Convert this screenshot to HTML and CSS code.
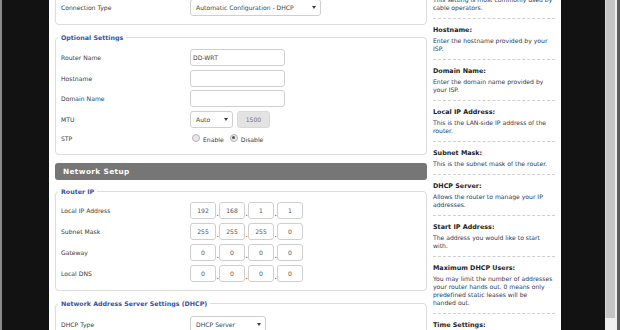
FILE: index.html
```html
<!DOCTYPE html>
<html>
<head>
  <title>Basic Setup</title>
  <meta name="viewport" content="width=device-width, initial-scale=1.0">
  <link rel="stylesheet" href="styles.css">
</head>
<body>
  <div class="screen">
    <div class="bezel-left"></div>

    <div class="page">
      <div class="form">
        <div class="card first">
          <div class="row">
            <span class="label">Connection Type</span>
            <div class="select conn">Automatic Configuration - DHCP<i class="caret"></i></div>
          </div>
        </div>

        <fieldset class="card optional">
          <legend>Optional Settings</legend>
          <div class="rows">
            <div class="row">
              <span class="label">Router Name</span>
              <div class="input">DD-WRT</div>
            </div>
            <div class="row">
              <span class="label">Hostname</span>
              <div class="input"></div>
            </div>
            <div class="row">
              <span class="label">Domain Name</span>
              <div class="input"></div>
            </div>
            <div class="row">
              <span class="label">MTU</span>
              <div class="select mtu">Auto<i class="caret"></i></div>
              <div class="input num disabled">1500</div>
            </div>
            <div class="row small">
              <span class="label">STP</span>
              <span class="radio"></span><span class="radio-text">Enable</span>
              <span class="radio checked"></span><span class="radio-text">Disable</span>
            </div>
          </div>
        </fieldset>

        <div class="section-title">Network Setup</div>

        <fieldset class="card router">
          <legend>Router IP</legend>
          <div class="rows">
            <div class="row">
              <span class="label">Local IP Address</span>
              <div class="ip"><span class="oct">192</span><i>.</i><span class="oct">168</span><i>.</i><span class="oct">1</span><i>.</i><span class="oct">1</span></div>
            </div>
            <div class="row">
              <span class="label">Subnet Mask</span>
              <div class="ip"><span class="oct">255</span><i>.</i><span class="oct">255</span><i>.</i><span class="oct">255</span><i>.</i><span class="oct">0</span></div>
            </div>
            <div class="row">
              <span class="label">Gateway</span>
              <div class="ip"><span class="oct">0</span><i>.</i><span class="oct">0</span><i>.</i><span class="oct">0</span><i>.</i><span class="oct">0</span></div>
            </div>
            <div class="row">
              <span class="label">Local DNS</span>
              <div class="ip"><span class="oct">0</span><i>.</i><span class="oct">0</span><i>.</i><span class="oct">0</span><i>.</i><span class="oct">0</span></div>
            </div>
          </div>
        </fieldset>

        <fieldset class="card dhcp">
          <legend>Network Address Server Settings (DHCP)</legend>
          <div class="row">
            <span class="label">DHCP Type</span>
            <div class="select dhcp-type">DHCP Server<i class="caret"></i></div>
          </div>
        </fieldset>
      </div>

      <div class="help">
        <div class="tip first">
          <h4>Automatic Configuration - DHCP:</h4>
          <p>This setting is most commonly used by<br>cable operators.</p>
        </div>
        <div class="tip">
          <h4>Hostname:</h4>
          <p>Enter the hostname provided by your<br>ISP.</p>
        </div>
        <div class="tip">
          <h4>Domain Name:</h4>
          <p>Enter the domain name provided by<br>your ISP.</p>
        </div>
        <div class="tip">
          <h4>Local IP Address:</h4>
          <p>This is the LAN-side IP address of the<br>router.</p>
        </div>
        <div class="tip">
          <h4>Subnet Mask:</h4>
          <p>This is the subnet mask of the router.</p>
        </div>
        <div class="tip">
          <h4>DHCP Server:</h4>
          <p>Allows the router to manage your IP<br>addresses.</p>
        </div>
        <div class="tip">
          <h4>Start IP Address:</h4>
          <p>The address you would like to start<br>with.</p>
        </div>
        <div class="tip">
          <h4>Maximum DHCP Users:</h4>
          <p>You may limit the number of addresses<br>your router hands out. 0 means only<br>predefined static leases will be<br>handed out.</p>
        </div>
        <div class="tip">
          <h4>Time Settings:</h4>
        </div>
      </div>
    </div>

    <div class="bezel-right"></div>
    <div class="scrollbar">
      <div class="track"><div class="thumb"></div></div>
      <div class="edge"></div>
    </div>
  </div>
</body>
</html>
```

FILE: styles.css
```css
/* Basic setup page, scrolled a little */

body {
  margin: 0;
  background-color: #111;
  font-family: "DejaVu Sans", Verdana, sans-serif;
  font-size: 6.1px;
  color: #3a3a3a;
  overflow: hidden;
}

.screen {
  display: flex;
  height: 330px;
  overflow: hidden;
}

.bezel-left {
  width: 49px;
  flex: none;
  background-color: #121212;
  border-left: 2px solid #8a8a8a;
  box-sizing: border-box;
}

.page {
  width: 512px;
  flex: none;
  display: flex;
  align-items: flex-start;
  background-color: #fff;
  padding-left: 6px;
  box-sizing: border-box;
}

.form {
  width: 372px;
  flex: none;
  margin-top: -9px;
}

.card {
  border: 1px solid #dcdcdc;
  border-radius: 4px;
  margin: 0;
  min-inline-size: 0;
}

.card.first {
  padding: 7px 5px 8px;
}

fieldset.card legend {
  color: #3453a4;
  font-weight: bold;
  font-size: 6.3px;
  line-height: 9px;
  padding: 0 3px;
  margin-left: -3px;
}

.card.optional {
  margin-top: 8px;
  padding: 7px 5px 9px;
}

.card.router {
  margin-top: 7px;
  padding: 6px 5px 8px;
}

.card.dhcp {
  margin-top: 8px;
  padding: 8px 5px 8px;
}

.rows {
  display: flex;
  flex-direction: column;
  gap: 3.5px;
}

.router .rows {
  gap: 4px;
}

.row {
  display: flex;
  align-items: center;
  height: 17px;
}

.row.small {
  height: 14px;
}

.label {
  width: 129px;
  flex: none;
}

.input,
.select,
.oct {
  height: 17px;
  box-sizing: border-box;
  border: 1px solid #cfcfcf;
  border-radius: 3px;
  background-color: #fff;
  line-height: 15px;
  color: #444;
}

.input {
  width: 95px;
  padding-left: 2px;
}

.input.num {
  width: 33px;
  margin-left: 4px;
  padding: 0;
  text-align: center;
}

.input.disabled {
  background-color: #e3e3e3;
  border-color: #d8d8d8;
  color: #777;
}

.select {
  position: relative;
  padding-left: 5px;
}

.select.conn {
  width: 131px;
}

.select.mtu {
  width: 43px;
}

.select.dhcp-type {
  width: 76px;
}

.caret {
  position: absolute;
  right: 4px;
  top: 6px;
  width: 0;
  height: 0;
  border-left: 2.5px solid transparent;
  border-right: 2.5px solid transparent;
  border-top: 3.5px solid #3c3c3c;
}

.radio {
  width: 8px;
  height: 8px;
  box-sizing: border-box;
  border: 1px solid #b5b5b5;
  border-radius: 50%;
  background-color: #e8e8e8;
  margin-left: 2px;
  margin-top: -1px;
  display: flex;
  align-items: center;
  justify-content: center;
}

.radio.checked::after {
  content: "";
  width: 3px;
  height: 3px;
  border-radius: 50%;
  background-color: #555;
}

.radio-text {
  margin-left: 3px;
  margin-right: 5px;
  margin-top: 2px;
}

.radio-text + .radio {
  margin-left: 1px;
}

.ip {
  display: flex;
  align-items: flex-end;
}

.oct {
  width: 26px;
  text-align: center;
  color: #555;
}

.ip i {
  font-style: normal;
  width: 2px;
  color: #b0552e;
  font-weight: bold;
  line-height: 10px;
  font-size: 6px;
  text-align: center;
  margin: 0 0.5px;
}

.section-title {
  margin-top: 8px;
  height: 17px;
  line-height: 17px;
  background-color: #767676;
  border-radius: 3px;
  color: #fff;
  font-weight: bold;
  font-size: 7.3px;
  letter-spacing: 0.4px;
  padding-left: 8px;
}

.help {
  width: 134px;
  flex: none;
  box-sizing: border-box;
  padding: 0 6px;
  margin-top: -22px;
}

.tip {
  padding: 7px 0 6px;
  border-bottom: 1px dashed #cfcfcf;
}

.tip h4 {
  margin: 0 0 3px;
  font-size: 6.4px;
  line-height: 8px;
  color: #222;
  white-space: nowrap;
}

.tip p {
  margin: 0;
  line-height: 8px;
  color: #2f3853;
  white-space: nowrap;
}

.bezel-right {
  width: 44px;
  flex: none;
  background-color: #121212;
}

.scrollbar {
  width: 15px;
  flex: none;
  display: flex;
}

.track {
  width: 12px;
  background-color: #efefef;
}

.thumb {
  width: 10px;
  height: 318px;
  background-color: #c5c5c5;
  border-left: 1px solid #dadada;
  box-sizing: border-box;
}

.edge {
  width: 3px;
  background-color: #5c5c5c;
}
```
